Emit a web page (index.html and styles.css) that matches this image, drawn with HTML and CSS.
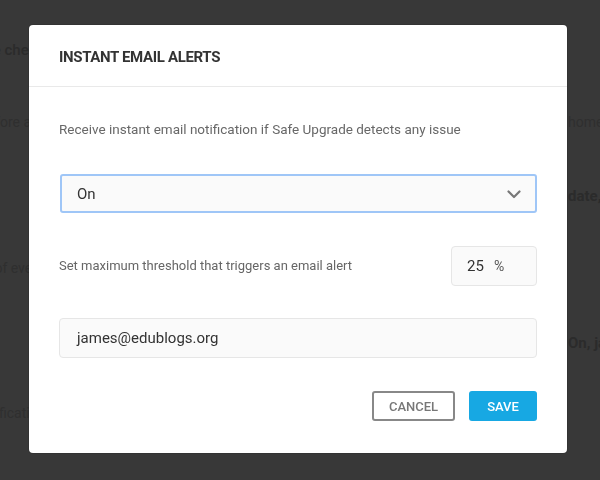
FILE: index.html
```html
<!DOCTYPE html>
<html lang="en">
<head>
<meta charset="utf-8">
<title>Instant Email Alerts</title>
<link rel="stylesheet" href="styles.css">
</head>
<body>
  <main class="page">
    <div class="page-col page-col-left">
      <p class="bg-line bg-strong bg-l1">Update checks</p>
      <p class="bg-line bg-l2">Before any update</p>
      <p class="bg-line bg-l4">Out of every run</p>
      <p class="bg-line bg-l5">Notification</p>
    </div>
    <div class="page-col page-col-right">
      <p class="bg-line bg-r1">homepage</p>
      <p class="bg-line bg-strong bg-r2">date, time</p>
      <p class="bg-line bg-strong bg-r3">On, james</p>
    </div>
  </main>

  <div class="overlay">
    <section class="modal" role="dialog" aria-labelledby="modal-title">
      <header class="modal-header">
        <h2 id="modal-title" class="modal-title">INSTANT EMAIL ALERTS</h2>
      </header>
      <div class="modal-body">
        <p class="desc">Receive instant email notification if Safe Upgrade detects any issue</p>

        <div class="select">
          <span class="select-value">On</span>
          <svg class="chevron" width="14" height="9" viewBox="0 0 14 9" aria-hidden="true">
            <path d="M1.5 1.5 L7 7 L12.5 1.5" fill="none" stroke="#777" stroke-width="2.2" stroke-linecap="round" stroke-linejoin="round"/>
          </svg>
        </div>

        <div class="threshold-row">
          <span class="threshold-label">Set maximum threshold that triggers an email alert</span>
          <div class="threshold-input">
            <span class="threshold-value">25</span>
            <span class="threshold-unit">%</span>
          </div>
        </div>

        <div class="text-input">james@edublogs.org</div>

        <div class="actions">
          <button class="btn btn-cancel" type="button">CANCEL</button>
          <button class="btn btn-save" type="button">SAVE</button>
        </div>
      </div>
    </section>
  </div>
</body>
</html>
```

FILE: styles.css
```css
* {
  box-sizing: border-box;
}

html, body {
  margin: 0;
  height: 100%;
}

body {
  background: #383838;
  font-family: Roboto, "Liberation Sans", Arial, sans-serif;
  overflow: hidden;
}

/* Dimmed settings page behind the dialog */
.page {
  display: flex;
  justify-content: space-between;
  height: 100%;
}

.page-col {
  display: flex;
  flex-direction: column;
  white-space: nowrap;
}

.page-col-left {
  margin-left: -47px;
}

.page-col-right {
  margin-right: -40px;
  width: 72px;
}

.bg-line {
  margin: 0;
  color: #2f2f2f;
  font-size: 14px;
  line-height: 20px;
}

.bg-strong {
  font-weight: 700;
  font-size: 15px;
  color: #2b2b2b;
}

.bg-l1 { margin-top: 40px; font-weight: 500; }
.bg-l2 { margin-top: 52px; margin-left: 26px; }
.bg-l4 { margin-top: 126px; margin-left: 16px; }
.bg-l5 { margin-top: 125px; margin-left: 20px; }

.bg-r1 { margin-top: 112px; }
.bg-r2 { margin-top: 54px; }
.bg-r3 { margin-top: 127px; }

/* Dialog */
.overlay {
  position: fixed;
  inset: 0;
  display: flex;
  align-items: flex-start;
  padding: 25px 0 0 29px;
}

.modal {
  width: 538px;
  background: #fff;
  border-radius: 4px;
  box-shadow: 0 0 0 1px rgba(0, 0, 0, 0.08);
}

.modal-header {
  height: 62px;
  display: flex;
  align-items: center;
  padding: 2px 30px 0;
  border-bottom: 1px solid #e9e9e9;
}

.modal-title {
  margin: 0;
  font-size: 15px;
  font-weight: 700;
  color: #333;
  letter-spacing: -0.35px;
}

.modal-body {
  display: flex;
  flex-direction: column;
  padding: 32px 30px 32px 31px;
}

.desc {
  margin: 0 0 35px -1px;
  font-size: 13.5px;
  line-height: 20px;
  color: #686868;
}

.select {
  display: flex;
  align-items: center;
  justify-content: space-between;
  height: 39px;
  padding: 0 14px 0 15px;
  background: #fafafa;
  border: 2px solid #9fc6f7;
  border-radius: 3px;
  margin-bottom: 33px;
}

.select-value {
  font-size: 15px;
  color: #333;
}

.chevron {
  display: block;
  margin-top: 1px;
}

.threshold-row {
  display: flex;
  align-items: center;
  justify-content: space-between;
  margin-bottom: 32px;
  margin-left: -1px;
}

.threshold-label {
  font-size: 13px;
  color: #666;
  margin-top: -2px;
}

.threshold-input {
  display: flex;
  align-items: center;
  gap: 10px;
  width: 86px;
  height: 40px;
  padding: 0 0 0 15px;
  background: #fafafa;
  border: 1px solid #e6e6e6;
  border-radius: 4px;
  font-size: 15px;
}

.threshold-value {
  color: #333;
}

.threshold-unit {
  color: #555;
  font-size: 14px;
}

.text-input {
  display: flex;
  align-items: center;
  height: 40px;
  margin-left: -1px;
  padding: 0 17px;
  background: #fafafa;
  border: 1px solid #e6e6e6;
  border-radius: 4px;
  font-size: 15px;
  color: #333;
  margin-bottom: 33px;
}

.actions {
  display: flex;
  justify-content: flex-end;
  gap: 14px;
}

.btn {
  height: 30px;
  border-radius: 3px;
  font-family: inherit;
  font-size: 13px;
  font-weight: 500;
  padding: 0;
  cursor: pointer;
}

.btn-cancel {
  width: 83px;
  background: #fff;
  border: 2px solid #888;
  color: #777;
}

.btn-save {
  width: 68px;
  background: #17a8e3;
  border: 0;
  color: #fff;
}
```
